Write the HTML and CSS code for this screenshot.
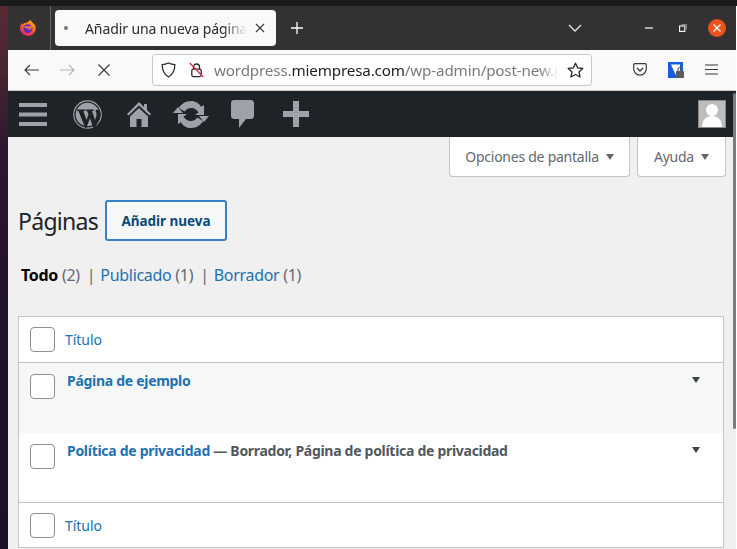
FILE: index.html
```html
<!DOCTYPE html>
<html lang="es">
<head>
<meta charset="utf-8">
<title>Añadir una nueva página</title>
<link rel="stylesheet" href="styles.css">
</head>
<body>
<div class="topstrip"></div>
<div class="desktop">
  <div class="wallpaper"></div>
  <div class="window">
    <div class="tabbar">
      <div class="ff-cell">
        <svg width="18" height="18" viewBox="0 0 18 18">
          <defs>
            <linearGradient id="ffg" x1="0.7" y1="0" x2="0.2" y2="1"><stop offset="0" stop-color="#ffb000"/><stop offset="0.5" stop-color="#ff5a2c"/><stop offset="1" stop-color="#e31587"/></linearGradient>
          </defs>
          <path d="M1.2 8c.2-1.700 1-3 1.800-3.800l.5 1.300C4.500 4.300 6 3.700 7.500 3.800 9 2.800 10.600 2 11.800.8c0 1.300 1 2.200 2.200 3.200 1.600 1.300 2.800 3 2.800 5.200A7.900 7.900 0 0 1 9 17 7.900 7.900 0 0 1 1.200 8z" fill="url(#ffg)"/>
          <circle cx="9" cy="9.600" r="4.400" fill="#5b2bbd"/>
          <path d="M4.600 8.200C6 7 8 6.800 9.400 7.200l3.600-.4c.4 2-.2 3.200-1.400 4-1 .6-2 .6-3 .2 1.300-.1 2-.8 2-1.400-1.200.4-3 .2-4-.6z" fill="#ff8a2c" opacity=".75"/>
        </svg>
      </div>
      <div class="tab">
        <span class="tab-dot"></span>
        <span class="tab-title">Añadir una nueva página</span>
        <svg class="tab-x" width="10" height="10" viewBox="0 0 10 10"><path d="M1 1l8 8M9 1l-8 8" stroke="#3a3a3a" stroke-width="1.100" fill="none"/></svg>
      </div>
      <svg class="newtab" width="12" height="12" viewBox="0 0 12 12"><path d="M6 0v12M0 6h12" stroke="#fff" stroke-width="1.300" fill="none"/></svg>
      <svg class="chevron" width="14" height="8" viewBox="0 0 14 8"><path d="M1 1l6 6 6-6" stroke="#e6e6e6" stroke-width="1.300" fill="none"/></svg>
      <div class="winctl">
        <svg width="8" height="2" viewBox="0 0 8 2"><path d="M0 1h8" stroke="#fff" stroke-width="1.200"/></svg>
        <svg width="8" height="8" viewBox="0 0 8 8"><rect x=".6" y="2" width="5.200" height="5.400" fill="none" stroke="#fff" stroke-width="1.100"/><path d="M2.500.5h5v5" fill="none" stroke="#9a9a9a" stroke-width=".9"/></svg>
        <span class="close"><svg width="8" height="8" viewBox="0 0 8 8"><path d="M.5.5l7 7M7.500.5l-7 7" stroke="#fff" stroke-width="1.300" fill="none"/></svg></span>
      </div>
    </div>
    <div class="navbar">
      <svg class="nav-back" width="15" height="12" viewBox="0 0 15 12"><path d="M15 6H1M6 1L1 6l5 5" stroke="#3a3a3a" stroke-width="1.200" fill="none"/></svg>
      <svg class="nav-fwd" width="15" height="12" viewBox="0 0 15 12"><path d="M0 6h14M9 1l5 5-5 5" stroke="#b5b5b5" stroke-width="1.200" fill="none"/></svg>
      <svg class="nav-stop" width="12" height="12" viewBox="0 0 12 12"><path d="M.5.5l11 11M11.500.5l-11 11" stroke="#3a3a3a" stroke-width="1.200" fill="none"/></svg>
      <div class="urlbar">
        <svg class="shield" width="15" height="16" viewBox="0 0 15 16"><path d="M7.500 1c2 .9 4.200 1.500 6.300 1.600 0 5.400-1.700 10-6.300 12.400C2.900 12.600 1.200 8 1.200 2.600 3.300 2.500 5.500 1.900 7.500 1z" fill="none" stroke="#2b2b2b" stroke-width="1.300"/></svg>
        <svg class="lock" width="15" height="16" viewBox="0 0 15 16"><path d="M4.500 7V5a3 3 0 0 1 6 0v2" fill="none" stroke="#2b2b2b" stroke-width="1.300"/><rect x="2.800" y="7.200" width="9.400" height="7.400" rx="1.500" fill="none" stroke="#2b2b2b" stroke-width="1.300"/><path d="M.8 1l13.500 14" stroke="#e22850" stroke-width="1.300"/></svg>
        <span class="url"><span class="url-dim">wordpress.</span><span class="url-dark">miempresa.com</span><span class="url-dim">/wp-admin/post-new.p</span></span>
        <svg class="star" width="17" height="16" viewBox="0 0 17 16"><path d="M8.500 1.200l2.200 4.700 5.100.6-3.800 3.500 1 5-4.500-2.500L4 15l1-5-3.800-3.500 5.100-.6z" fill="none" stroke="#2b2b2b" stroke-width="1.300" stroke-linejoin="round"/></svg>
      </div>
      <div class="nav-tools">
        <svg width="14" height="13" viewBox="0 0 14 13"><path d="M1.800.7h10.400c.7 0 1.100.5 1.100 1.100v4c0 3.300-2.800 6.400-6.300 6.400S.7 9.100.7 5.800v-4C.7 1.200 1.100.7 1.800.7z" fill="none" stroke="#3a3a3a" stroke-width="1.200"/><path d="M4 5l3 3 3-3" fill="none" stroke="#3a3a3a" stroke-width="1.300"/></svg>
        <svg width="16" height="16" viewBox="0 0 16 16"><path d="M0 0h15v8c0 4-3.500 6.500-7.500 8H0z" fill="#175ddc"/><path d="M3 2.500h9v5.500c0 2-2 3.500-4.500 4.800z" fill="#fff"/><rect x="8" y="9" width="8" height="7" rx="1" fill="#5a5a5a"/><path d="M10 9V7.500a2 2 0 0 1 4 0V9" fill="none" stroke="#5a5a5a" stroke-width="1.200"/></svg>
        <svg width="13" height="11" viewBox="0 0 13 11"><path d="M0 1h13M0 5.500h13M0 10h13" stroke="#3a3a3a" stroke-width="1.100"/></svg>
      </div>
    </div>
    <div class="page">
      <div class="adminbar">
        <div class="admin-icons">
          <svg width="28" height="23" viewBox="0 0 28 23"><path d="M0 0h28v4H0zM0 9.500h28v4H0zM0 19h28v4H0z" fill="#9ca2a7"/></svg>
          <svg width="29" height="29" viewBox="0 0 29 29"><circle cx="14.500" cy="14.500" r="13.700" fill="none" stroke="#9ca2a7" stroke-width="1.200"/><circle cx="14.500" cy="14.500" r="11.800" fill="#9ca2a7"/><path d="M4 9.500h8.200v1.300l-1.800.2 3.100 9 2-5.700-1.400-3.300-1.300-.2V9.500h8v1.300l-1.800.2 3.100 9 1.300-4.500c.6-2.200-.5-3.200-.9-4.200 0-.8.600-1.500 1.500-1.500h1.800l1.800 4-1 5.500-5 9h-1l-3.700-10-3.600 10h-1L5.500 11 4 10.800z" fill="#1d2327"/></svg>
          <svg width="24" height="27" viewBox="0 0 24 27"><path d="M12 1L0 13l1.500 1.500L12 4.500l10.500 10L24 13l-4-4V3h-3v3z" fill="#9ca2a7"/><path d="M3 15.500L12 7l9 8.500V26h-6.500v-8h-5v8H3z" fill="#9ca2a7"/></svg>
          <svg width="36" height="29" viewBox="0 0 36 29"><path d="M18 2c4.500 0 8 2.200 10 5.800l3-1.800v10h-9l3.500-2.500C24 10.800 21.500 9 18 9c-2.700 0-5 1.500-6.300 3.500L5.800 9C8.200 4.800 12.700 2 18 2z" fill="#9ca2a7" transform="translate(0 -1)"/><path d="M18 27c-4.500 0-8-2.200-10-5.800L5 23V13h9l-3.500 2.500C12 18.200 14.500 20 18 20c2.700 0 5-1.500 6.300-3.500l5.900 3.500C27.800 24.200 23.300 27 18 27z" fill="#9ca2a7" transform="translate(0 1)"/><path d="M0 13h10l-5-6zM26 16h10l-5 6z" fill="#9ca2a7"/></svg>
          <svg width="23" height="28" viewBox="0 0 23 28"><path d="M3 0h17c1.700 0 3 1.300 3 3v13c0 1.700-1.300 3-3 3h-5l-7 9v-9H3c-1.700 0-3-1.300-3-3V3c0-1.700 1.300-3 3-3z" fill="#9ca2a7"/></svg>
          <svg width="26" height="26" viewBox="0 0 26 26"><path d="M10 0h6v10h10v6H16v10h-6V16H0v-6h10z" fill="#9ca2a7"/></svg>
        </div>
        <div class="avatar"><svg width="26" height="26" viewBox="0 0 26 26"><rect width="26" height="26" fill="#bdbdbd"/><circle cx="13" cy="9" r="6" fill="#fff"/><path d="M3 26c0-7 4-11 10-11s10 4 10 11z" fill="#fff"/></svg></div>
      </div>
      <div class="content">
        <div class="screen-meta">
          <button class="meta-btn meta-options">Opciones de pantalla<span class="caret"></span></button>
          <button class="meta-btn meta-help">Ayuda<span class="caret"></span></button>
        </div>
        <div class="heading">
          <h1>Páginas</h1>
          <a class="add-new">Añadir nueva</a>
        </div>
        <ul class="subsub">
          <li><b>Todo</b> <span class="count">(2)</span></li>
          <li class="sep">|</li>
          <li><a>Publicado</a> <span class="count">(1)</span></li>
          <li class="sep">|</li>
          <li><a>Borrador</a> <span class="count">(1)</span></li>
        </ul>
        <div class="table">
          <div class="row row-head"><span class="check"></span><a class="col-title">Título</a></div>
          <div class="row row-item row-alt">
            <span class="check"></span>
            <div class="item-title"><a>Página de ejemplo</a></div>
            <span class="toggle"></span>
          </div>
          <div class="row row-item row-last">
            <span class="check"></span>
            <div class="item-title"><a>Política de privacidad</a> — Borrador, Página de política de privacidad</div>
            <span class="toggle"></span>
          </div>
          <div class="row row-foot"><span class="check"></span><a class="col-title">Título</a></div>
        </div>
      </div>
      <div class="scrollthumb"></div>
    </div>
  </div>
</div>
</body>
</html>
```
FILE: styles.css
```css
* { box-sizing: border-box; }
html, body { margin: 0; padding: 0; height: 100%; overflow: hidden; }
body {
  width: 737px;
  height: 549px;
  font-family: "Noto Sans", "Open Sans", sans-serif;
  background: #1a1a1a;
  display: flex;
  flex-direction: column;
}
svg { display: block; flex: none; }
a { color: #2271b1; text-decoration: none; }

.topstrip { height: 6px; background: #1b1b1b; flex: none; }
.desktop { flex: 1; display: flex; min-height: 0; }
.wallpaper {
  width: 8px;
  flex: none;
  background: linear-gradient(#5a2a34 0, #4a2733 60px, #2f1730 140px, #22122a 300px, #1e1026 549px);
}
.window { flex: 1; display: flex; flex-direction: column; min-width: 0; padding-right: 1px; background: #fff; }

.tabbar {
  height: 44px;
  flex: none;
  background: #333131;
  display: flex;
  align-items: center;
  position: relative;
}
.ff-cell {
  width: 43px;
  height: 44px;
  flex: none;
  display: flex;
  align-items: center;
  justify-content: center;
  border-right: 1px solid #666;
  padding-right: 2px;
}
.tab {
  margin-left: 4px;
  width: 221px;
  height: 36px;
  background: #f9f9fa;
  border-radius: 4px;
  display: flex;
  align-items: center;
  padding-left: 9px;
  flex: none;
  position: relative;
}
.tab-dot { width: 4px; height: 4px; border-radius: 50%; background: #777; flex: none; }
.tab-title {
  margin-left: 17px;
  width: 162px;
  font-size: 14px;
  letter-spacing: -0.1px;
  color: #2b2b2b;
  white-space: nowrap;
  overflow: hidden;
  -webkit-mask-image: linear-gradient(to right, #000 138px, transparent 162px);
  mask-image: linear-gradient(to right, #000 138px, transparent 162px);
}
.tab-x { margin-left: 8px; }
.newtab { margin-left: 15px; }
.chevron { margin-left: 265px; }
.winctl { margin-left: 63px; display: flex; align-items: center; gap: 26px; }
.close {
  width: 18px;
  height: 18px;
  border-radius: 50%;
  background: #e95420;
  display: flex;
  align-items: center;
  justify-content: center;
  margin-left: -5px;
}

.navbar {
  height: 41px;
  flex: none;
  background: #f9f9fa;
  border-bottom: 1px solid #c8c8c8;
  display: flex;
  align-items: center;
  padding-bottom: 1px;
}
.nav-back { margin-left: 16px; }
.nav-fwd { margin-left: 21px; }
.nav-stop { margin-left: 23px; }
.urlbar {
  margin-left: 42px;
  width: 440px;
  height: 32px;
  background: #fff;
  border: 1px solid #c9c9c9;
  border-radius: 4px;
  display: flex;
  align-items: center;
  padding-left: 8px;
  flex: none;
}
.lock { margin-left: 13px; }
.url {
  margin-left: 10px;
  width: 345px;
  font-size: 15.200px;
  letter-spacing: -0.15px;
  white-space: nowrap;
  overflow: hidden;
  -webkit-mask-image: linear-gradient(to right, #000 325px, transparent 345px);
  mask-image: linear-gradient(to right, #000 325px, transparent 345px);
}
.url-dim { color: #7a7a7a; }
.url-dark { color: #1f1f1f; }
.star { margin-left: 8px; }
.nav-tools { margin-left: 41px; display: flex; align-items: center; gap: 21px; }

.page { flex: 1; display: flex; flex-direction: column; min-height: 0; background: #f0f0f1; position: relative; overflow: hidden; }
.adminbar {
  height: 46px;
  flex: none;
  background: #1d2327;
  display: flex;
  align-items: center;
  justify-content: space-between;
  padding: 0 10px 0 11px;
}
.admin-icons { display: flex; align-items: center; gap: 22px; }
.admin-icons svg:nth-child(2) { margin-left: 4px; }
.admin-icons svg:nth-child(3) { margin-left: 3px; }
.admin-icons svg:nth-child(6) { margin-left: 7px; }
.avatar { border: 1px solid #8a8a8a; width: 28px; height: 28px; }

.content { flex: 1; min-height: 0; padding: 0 10px 0 10px; }
.screen-meta { display: flex; justify-content: flex-end; gap: 7px; }
.meta-btn {
  height: 40px;
  background: #fff;
  border: 1px solid #c3c4c7;
  border-top: 0;
  border-radius: 0 0 4px 4px;
  font: inherit;
  font-size: 14px;
  letter-spacing: -0.25px;
  color: #646970;
  display: flex;
  align-items: center;
  justify-content: center;
  padding: 0;
}
.meta-options { width: 181px; }
.meta-help { width: 89px; }
.caret {
  margin-left: 7px;
  width: 0;
  height: 0;
  border-left: 4.500px solid transparent;
  border-right: 4.500px solid transparent;
  border-top: 6px solid #646970;
}

.heading { display: flex; align-items: center; margin-top: 23px; }
h1 {
  margin: 0;
  width: 87px;
  font-size: 23px;
  font-weight: 400;
  letter-spacing: -0.7px;
  color: #1d2327;
  flex: none;
}
.add-new {
  width: 122px;
  height: 41px;
  border: 2px solid #3582c4;
  border-radius: 3px;
  background: #f6f7f7;
  color: #0a4b78;
  font-size: 13.500px;
  font-weight: 700;
  letter-spacing: -0.03px;
  display: flex;
  align-items: center;
  justify-content: center;
}

.subsub {
  list-style: none;
  margin: 22px 0 0 3px;
  padding: 0;
  display: flex;
  gap: 7px;
  font-size: 16px;
  letter-spacing: -0.3px;
  line-height: 24px;
  color: #646970;
}
.subsub b { color: #000; }
.sep { color: #646970; margin-right: -2px; }

.table {
  margin-top: 29px;
  width: 706px;
  background: #fff;
  border: 1px solid #c3c4c7;
  border-bottom: 0;
}
.row { display: flex; position: relative; padding-left: 11px; }
.row-head {
  height: 46px;
  align-items: center;
  border-bottom: 1px solid #c3c4c7;
}
.row-foot {
  height: 46px;
  align-items: center;
  border-top: 1px solid #c3c4c7;
  border-bottom: 1px solid #c3c4c7;
}
.row-item { height: 70px; padding-top: 11px; }
.row-last { height: 69px; }
.row-alt { background: #f6f7f7; }
.check {
  width: 25px;
  height: 25px;
  flex: none;
  background: #fff;
  border: 1px solid #8c8f94;
  border-radius: 4px;
}
.col-title { margin-left: 10px; font-size: 14px; letter-spacing: -0.05px; }
.item-title {
  margin-left: 12px;
  margin-top: -3px;
  font-size: 14px;
  font-weight: 700;
  letter-spacing: -0.29px;
  color: #50575e;
  line-height: 20px;
}
.toggle {
  position: absolute;
  right: 23px;
  top: 14px;
  width: 0;
  height: 0;
  border-left: 4.500px solid transparent;
  border-right: 4.500px solid transparent;
  border-top: 6px solid #3c434a;
}
.scrollthumb {
  position: absolute;
  right: 0;
  top: 2px;
  width: 3px;
  height: 336px;
  background: #7d7d7d;
  border-radius: 2px;
}
```
